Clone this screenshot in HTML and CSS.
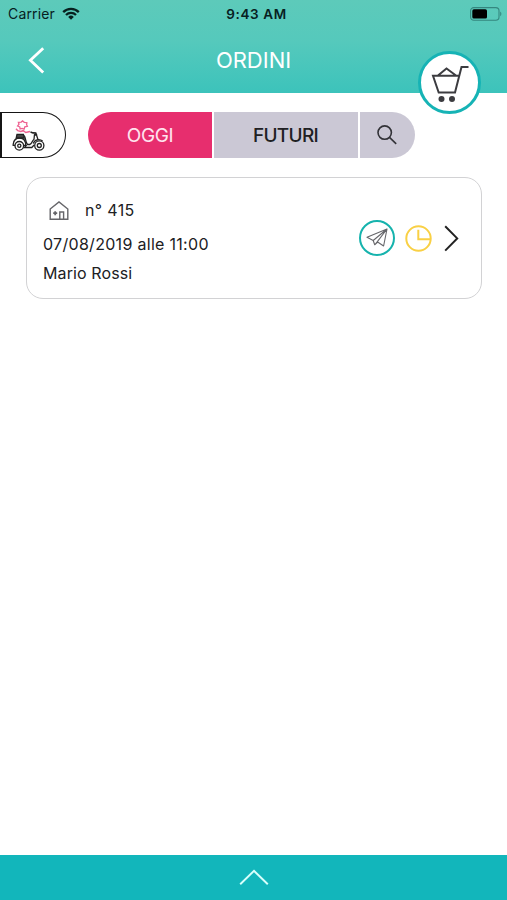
FILE: index.html
```html
<!DOCTYPE html>
<html lang="it">
<head>
    <meta charset="UTF-8">
    <meta name="viewport" content="width=device-width, initial-scale=1.0">
    <title>Ordini</title>
    <link rel="stylesheet" href="styles.css">
</head>
<body>
    <header class="header">
        <div class="status-bar">
            <div class="carrier">
                <span>Carrier</span>
                <svg width="18" height="13" viewBox="0 0 18 13" fill="none" stroke="#07201f" stroke-width="2.3">
                    <path d="M1.2 5.1a11 11 0 0 1 15.6 0M4 8a7.1 7.1 0 0 1 10 0"/>
                    <path d="M9 12.7 6.2 9.9a4 4 0 0 1 5.6 0z" fill="#07201f" stroke="none"/>
                </svg>
            </div>
            <span class="time">9:43 AM</span>
            <svg class="battery" width="32" height="14" viewBox="0 0 32 14">
                <rect x=".6" y=".6" width="28.4" height="12.6" rx="3.2" fill="none" stroke="#35877f" stroke-width="1.1"/>
                <rect x="2.3" y="2.3" width="14.7" height="9.2" rx="1.6" fill="#000"/>
                <path d="M30.2 4.6c1.6.8 1.6 3.8 0 4.6z" fill="#35877f"/>
            </svg>
        </div>
        <nav class="nav">
            <button class="back" aria-label="Indietro">
                <svg width="17" height="27" viewBox="0 0 17 27" fill="none" stroke="#fff" stroke-width="2.8"><path d="M15.2 1.2 2.4 13.3l12.8 12.2"/></svg>
            </button>
            <h1 class="title">ORDINI</h1>
        </nav>
        <button class="cart" aria-label="Carrello">
            <svg width="40" height="40" viewBox="0 0 40 40" fill="none" stroke="#3c3c40" stroke-width="2">
                <path d="M38.5 4h-7L25 29.5H8.7L3 12.8h25.5M8 12.5l8.5-7 9.5 7"/>
                <circle cx="11.5" cy="36" r="3" fill="#3c3c40" stroke="none"/>
                <circle cx="22" cy="36" r="3" fill="#3c3c40" stroke="none"/>
            </svg>
        </button>
    </header>

    <main class="content">
        <div class="toolbar">
            <button class="delivery" aria-label="Consegne">
                <svg width="34" height="31" viewBox="0 0 34 31" fill="none" stroke="#222" stroke-width="1.3">
                    <g stroke="#ee6392">
                        <path d="m7 4.2-.6-1.8 2.8-.3L10.6.9l1.7 1.4 2.6.4-.3 2 .8 1.6-2.6.6-.7 2.2-2-.7-2 .5-.3-2L5.6 6z"/>
                        <path d="m4 8.7 1.8 2 3 .8 2.4-.8 2.6 1.8 4.2-1" stroke-width="1.5"/>
                    </g>
                    <path d="M12.2 15.5c1.8 2.6 1 6.6 3.3 9h2.3c2.6-.7 2-3.8 4.2-5.3l.5-5M22.3 14l2.2 1 1.7 5.2M14.6 25l-2.2 2.5h7.4l2.3-2.5"/>
                    <path d="M1.2 24.3c.4-4 3-6.3 6.6-6.3 4.2 0 5.9 3 5.9 7.4H1.2z" fill="#fff"/>
                    <path d="M5 14.3h6.4l.9 3.7H4.2z" fill="#444"/>
                    <path d="m18.5 12 2.6.9 2.6.1.6 1.6-1.8.6" stroke-width="1.6"/>
                    <circle cx="7.3" cy="25.8" r="4.3" fill="#fff"/>
                    <circle cx="7.3" cy="25.8" r="1.6"/>
                    <circle cx="27.3" cy="25.5" r="4.6" fill="#fff"/>
                    <circle cx="27.3" cy="25.5" r="2"/>
                    <path d="M21.3 23.5c1-4 6.2-5.1 9.3-2.4"/>
                </svg>
            </button>
            <div class="tabs">
                <button class="tab tab-today active">OGGI</button>
                <button class="tab tab-future">FUTURI</button>
                <button class="tab tab-search" aria-label="Cerca">
                    <svg width="20" height="20" viewBox="0 0 20 20" fill="none" stroke="#333338" stroke-width="1.6"><circle cx="7.7" cy="7.6" r="6.7"/><path d="m12.5 12.4 6.7 6.4"/></svg>
                </button>
            </div>
        </div>

        <article class="order">
            <div class="order-info">
                <div class="order-number">
                    <svg width="20" height="19" viewBox="0 0 20 19" fill="none" stroke="#66666a" stroke-width="1.4">
                        <path d="M1.2 8 10 .9 18.8 8v10.3H1.2zM10.8 18V11h3.8v7"/>
                        <path d="M4.2 12.2h4M6.2 10.2v4" stroke-width="1.8"/>
                    </svg>
                    <span>n° 415</span>
                </div>
                <p class="order-date">07/08/2019 alle 11:00</p>
                <p class="order-name">Mario Rossi</p>
            </div>
            <div class="order-actions">
                <span class="send">
                    <svg width="22" height="20" viewBox="0 0 22 20" fill="none" stroke="#66666a" stroke-width="1.1" stroke-linejoin="round">
                        <path d="M21 1 1 9.3l6.2 3.2zM21 1l-3.4 17-4.1-2.8-2.3-1.4zM21 1 7.2 12.5l1.5 4.3 2.5-3M8.7 16.8l3-2.6"/>
                    </svg>
                </span>
                <svg class="clock" width="27" height="27" viewBox="0 0 27 27" fill="none" stroke="#f9d045" stroke-width="2"><circle cx="13.5" cy="13.5" r="12.2"/><path d="M13.3 4.8v9.4h12"/></svg>
                <svg class="arrow" width="15" height="27" viewBox="0 0 15 27" fill="none" stroke="#222" stroke-width="2"><path d="m1.2 1.2 12 12.2-12 12.2"/></svg>
            </div>
        </article>
    </main>

    <footer class="footer">
        <svg width="30" height="17" viewBox="0 0 30 17" fill="none" stroke="#d8fffb" stroke-width="2"><path d="M1.2 15.2 15 1.8l13.8 13.4"/></svg>
    </footer>
</body>
</html>
```
FILE: styles.css
```css
* { margin: 0; padding: 0; box-sizing: border-box; }
body { display: flex; flex-direction: column; height: 100vh; overflow: hidden; background: #fff; color: #202023; font-family: Inter, "Liberation Sans", sans-serif; }
button { border: none; background: none; font-family: inherit; color: inherit; cursor: pointer; }
svg { display: block; flex-shrink: 0; }

.header { position: relative; height: 93px; background: linear-gradient(to bottom, #5dcaba 0%, #55c9bc 45%, #3cc3bb 100%); }
.status-bar { display: grid; grid-template-columns: 1fr auto 1fr; align-items: center; height: 27px; padding: 0 5px 0 8px; font-size: 14px; color: #07201f; }
.carrier { display: flex; align-items: center; gap: 7px; letter-spacing: 0.15px; }
.time { padding-left: 3px; font-size: 13.5px; font-weight: 600; letter-spacing: 0.6px; }
.battery { justify-self: end; }
.nav { display: grid; grid-template-columns: 60px 1fr 60px; align-items: center; height: 66px; }
.back { padding-left: 28px; }
.title { font-size: 22px; font-weight: 400; color: #fff; text-align: center; }
.cart { position: absolute; top: 51px; right: 26px; z-index: 1; display: flex; align-items: center; justify-content: center; width: 63px; height: 63px; border: 3px solid #16b3b5; border-radius: 50%; background: #fff; }

.content { flex: 1; padding-top: 19px; }
.toolbar { display: flex; gap: 22px; height: 46px; }
.delivery { display: flex; align-items: center; width: 66px; padding-left: 10px; border: 1.5px solid #151515; border-left-width: 2px; border-radius: 0 23px 23px 0; }
.tabs { display: flex; gap: 2px; width: 327px; border-radius: 23px; overflow: hidden; }
.tab { display: flex; align-items: center; justify-content: center; background: #cbc8d5; font-size: 19px; letter-spacing: -0.4px; }
.tab-today { width: 124px; }
.tab-future { width: 144px; padding-right: 1px; font-weight: 500; letter-spacing: -0.7px; }
.tab-search { width: 55px; padding-right: 1px; }
.tab.active { background: #e72e6e; color: #ffe4ef; }

.order { display: flex; justify-content: space-between; height: 122px; margin: 19px 25px 0 26px; padding: 0 22px 0 16px; border: 1.5px solid #d2d2d4; border-radius: 17px; }
.order-info { padding-top: 18px; font-size: 16px; line-height: 28px; }
.order-number { display: flex; align-items: center; gap: 16px; padding-left: 6px; letter-spacing: 0.35px; }
.order-date { margin-top: 6px; letter-spacing: 0.3px; }
.order-name { margin-top: 1px; letter-spacing: 0.1px; }
.order-actions { display: flex; align-items: center; }
.send { display: flex; align-items: center; justify-content: center; width: 36px; height: 36px; border: 2.5px solid #16b3ad; border-radius: 50%; }
.clock { margin-left: 10px; }
.arrow { margin-left: 12px; }

.footer { display: flex; justify-content: center; height: 45px; padding-top: 14px; background: #12b6bb; }
```
